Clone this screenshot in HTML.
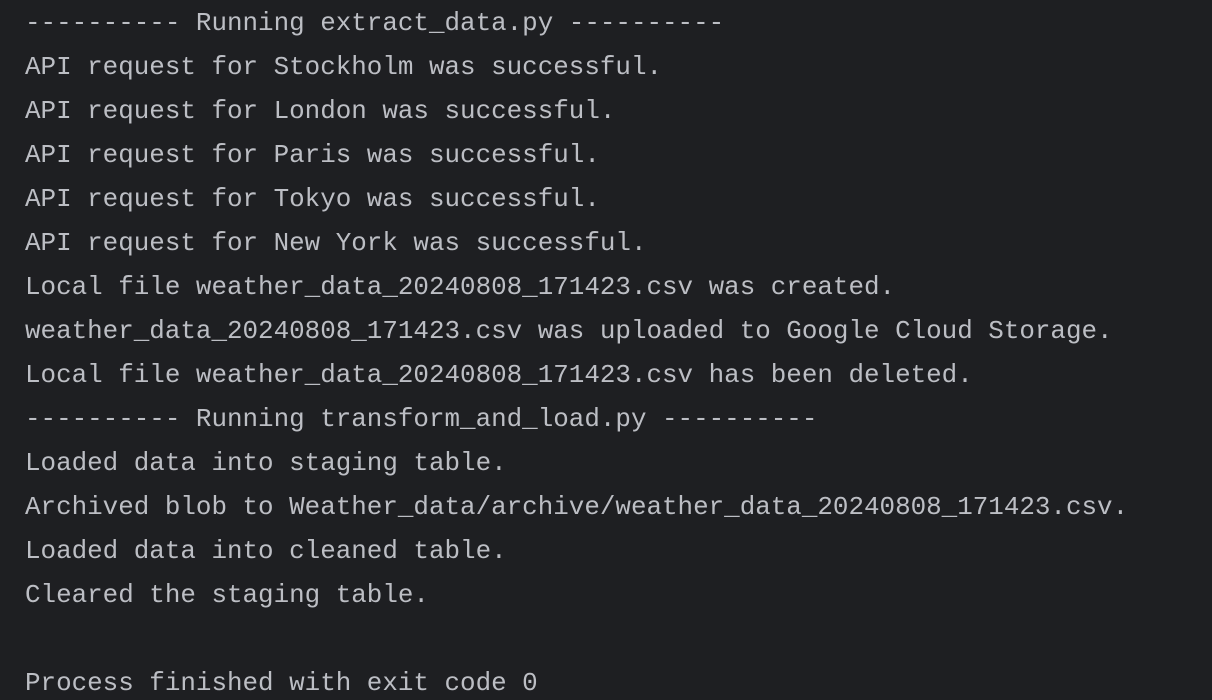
<!DOCTYPE html>
<html><head><meta charset="utf-8"><style>
html,body{margin:0;padding:0;background:#1e1f22;width:1212px;height:700px;overflow:hidden}
pre{margin:0;padding:1px 0 0 25px;font-family:"Liberation Mono","DejaVu Sans Mono",monospace;font-size:25.9px;line-height:44px;color:#bcbec4;white-space:pre}
</style></head><body><pre>---------- Running extract_data.py ----------
API request for Stockholm was successful.
API request for London was successful.
API request for Paris was successful.
API request for Tokyo was successful.
API request for New York was successful.
Local file weather_data_20240808_171423.csv was created.
weather_data_20240808_171423.csv was uploaded to Google Cloud Storage.
Local file weather_data_20240808_171423.csv has been deleted.
---------- Running transform_and_load.py ----------
Loaded data into staging table.
Archived blob to Weather_data/archive/weather_data_20240808_171423.csv.
Loaded data into cleaned table.
Cleared the staging table.

Process finished with exit code 0</pre></body></html>
